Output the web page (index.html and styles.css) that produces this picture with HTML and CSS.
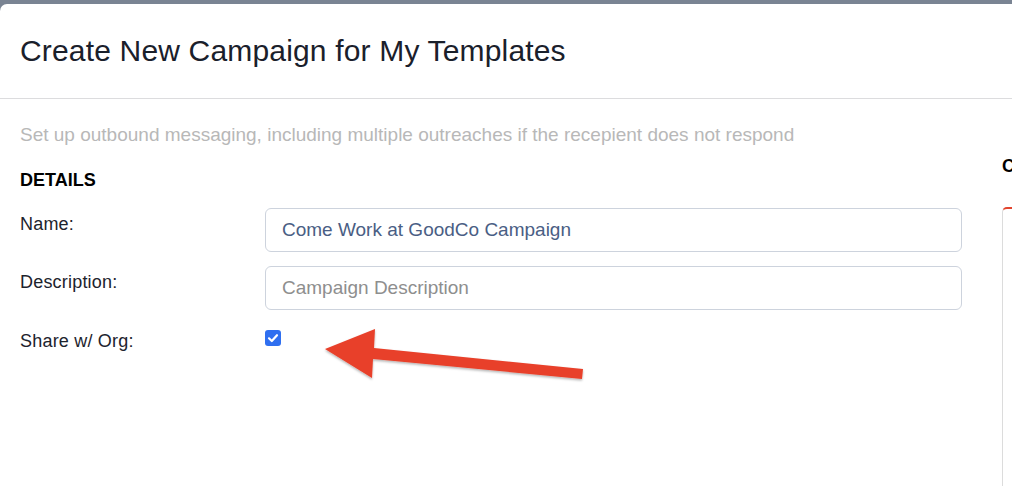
FILE: index.html
```html
<!DOCTYPE html>
<html>
<head>
<meta charset="utf-8">
<link rel="stylesheet" href="styles.css">
</head>
<body>
<div class="modal">
  <div class="modal-header">
    <h1 class="modal-title">Create New Campaign for My Templates</h1>
  </div>
  <div class="modal-body">
    <p class="intro">Set up outbound messaging, including multiple outreaches if the recepient does not respond</p>
    <div class="columns">
      <div class="details">
        <h2 class="section-title">DETAILS</h2>
        <div class="form-row">
          <label class="form-label">Name:</label>
          <div class="form-input">Come Work at GoodCo Campaign</div>
        </div>
        <div class="form-row">
          <label class="form-label">Description:</label>
          <div class="form-input placeholder">Campaign Description</div>
        </div>
        <div class="form-row check-row">
          <label class="form-label">Share w/ Org:</label>
          <span class="checkbox">
            <svg width="16" height="16" viewBox="0 0 16 16"><path d="M4 8.3 L6.8 11 L12 5.2" fill="none" stroke="#fff" stroke-width="2.2" stroke-linecap="round" stroke-linejoin="round"/></svg>
          </span>
        </div>
      </div>
      <div class="side">
        <h2 class="side-title">Campaign Steps</h2>
        <div class="side-panel"></div>
      </div>
    </div>
  </div>
  <svg class="arrow" width="300" height="70" viewBox="0 0 300 70">
    <defs>
      <filter id="sh" x="-10%" y="-20%" width="120%" height="140%">
        <feDropShadow dx="0" dy="1.5" stdDeviation="1.2" flood-color="#000" flood-opacity="0.3"/>
      </filter>
    </defs>
    <polygon filter="url(#sh)" fill="#e8402a" points="25,33 75,13 74,32 283,53 282,63 73,43 72,62"/>
  </svg>
</div>
</body>
</html>
```
FILE: styles.css
```css
html, body {
  margin: 0;
  padding: 0;
}
body {
  background: #7a8493;
  overflow: hidden;
  font-family: "Liberation Sans", Arial, Helvetica, sans-serif;
  width: 1012px;
  height: 486px;
}
.modal {
  position: relative;
  margin-top: 4px;
  width: 1120px;
  height: 482px;
  background: #fff;
  border-top-left-radius: 7px;
}
.modal-header {
  height: 94px;
  padding: 0 20px;
  display: flex;
  align-items: center;
  border-bottom: 1px solid #dcdcde;
}
.modal-title {
  margin: 0;
  font-size: 30px;
  font-weight: normal;
  color: #1a202b;
  letter-spacing: 0.17px;
}
.modal-body {
  padding: 24px 20px 0 20px;
}
.intro {
  margin: 0;
  font-size: 19px;
  line-height: 24px;
  color: #b8b8b8;
}
.columns {
  display: grid;
  grid-template-columns: 942px 1fr;
  column-gap: 40px;
}
.details {
  padding-top: 22px;
}
.section-title {
  margin: 0 0 17px 0;
  font-size: 18px;
  line-height: 22px;
  font-weight: bold;
  color: #000;
}
.form-row {
  display: grid;
  grid-template-columns: 245px 1fr;
  margin-bottom: 14px;
}
.form-label {
  font-size: 18px;
  line-height: 22px;
  padding-top: 5px;
  color: #1d232d;
  letter-spacing: 0.2px;
}
.form-input {
  height: 42px;
  border: 1px solid #cdd3dd;
  border-radius: 6px;
  padding: 0 16px;
  display: flex;
  align-items: center;
  font-size: 19px;
  color: #4a5e84;
}
.form-input.placeholder {
  color: #8e8e8e;
}
.check-row .form-label {
  padding-top: 6px;
}
.checkbox {
  width: 16px;
  height: 16px;
  margin-top: 6px;
  border-radius: 3px;
  background: #2f6ff0;
  display: block;
}
.checkbox svg {
  display: block;
}
.side {
  padding-top: 8px;
}
.side-title {
  margin: 0;
  font-size: 18px;
  line-height: 22px;
  font-weight: bold;
  color: #000;
  white-space: nowrap;
}
.side-panel {
  margin-top: 30px;
  height: 300px;
  border-left: 1px solid #dcdcdc;
  border-top: 2px solid #e2452e;
  border-top-left-radius: 5px;
}
.arrow {
  position: absolute;
  left: 300px;
  top: 312px;
}
```
